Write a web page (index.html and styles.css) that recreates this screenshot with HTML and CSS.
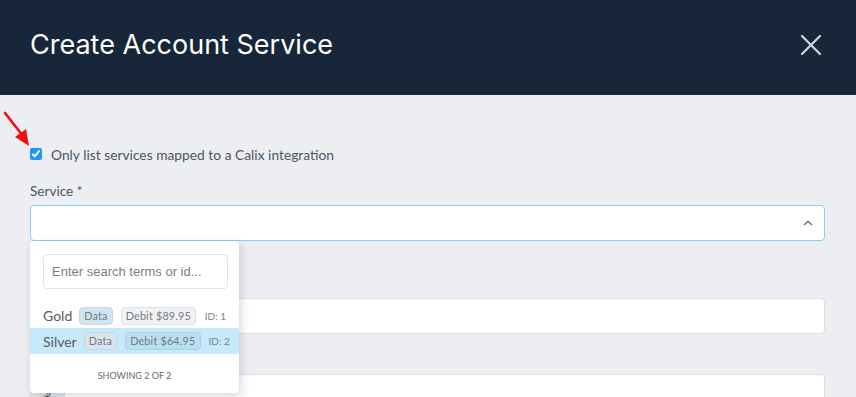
FILE: index.html
```html
<!DOCTYPE html>
<html lang="en">
<head>
    <meta charset="UTF-8">
    <title>Create Account Service</title>
    <link rel="stylesheet" href="styles.css">
</head>
<body>
    <div class="modal">
        <div class="modal-header">
            <h1>Create Account Service</h1>
            <button class="close" aria-label="Close">
                <svg width="20" height="20" viewBox="0 0 20 20"><path d="M1 1L19 19M19 1L1 19" stroke="#d3d7dc" stroke-width="2.2" stroke-linecap="round"/></svg>
            </button>
        </div>

        <div class="modal-body">
            <!-- annotation arrow -->
            <svg class="pointer" width="32" height="38" viewBox="0 0 32 38">
                <path d="M3 3L21 26" stroke="#f01010" stroke-width="2.6" stroke-linecap="round"/>
                <path d="M13 27L27 36L24 19Z" fill="#f01010"/>
            </svg>

            <label class="check-row">
                <input type="checkbox" checked>
                <span>Only list services mapped to a Calix integration</span>
            </label>

            <div class="field field-service">
                <label>Service *</label>
                <div class="select open">
                    <svg class="caret" width="10" height="6" viewBox="0 0 10 6"><path d="M1 5L5 1.5L9 5" fill="none" stroke="#6b7380" stroke-width="1.6"/></svg>
                </div>

                <!-- Dropdown -->
                <div class="dropdown">
                    <input type="text" class="search" placeholder="Enter search terms or id...">
                    <ul class="options">
                        <li>
                            <span class="name">Gold</span>
                            <span class="badge badge-type">Data</span>
                            <span class="badge badge-price">Debit $89.95</span>
                            <span class="id">ID: 1</span>
                        </li>
                        <li class="active">
                            <span class="name">Silver</span>
                            <span class="badge badge-type">Data</span>
                            <span class="badge badge-price">Debit $64.95</span>
                            <span class="id">ID: 2</span>
                        </li>
                    </ul>
                    <div class="count">Showing 2 of 2</div>
                </div>
            </div>

            <div class="field">
                <label>Start Date</label>
                <input type="text" class="input">
            </div>

            <div class="field">
                <label>Price</label>
                <div class="input-group">
                    <span class="addon">$</span>
                    <input type="text" class="input">
                </div>
            </div>
        </div>
    </div>
</body>
</html>
```

FILE: styles.css
```css
body {
    margin: 0;
    background: #eceef2;
    font-family: "Lato", "Noto Sans", sans-serif;
    color: #4d5562;
    overflow: hidden;
}

/* Header */
.modal-header {
    height: 95px;
    background: #172638;
    display: flex;
    align-items: center;
    justify-content: space-between;
    padding: 0 35px 0 30px;
}

h1 {
    margin: 0;
    margin-top: -6px;
    font-family: "Inter", sans-serif;
    font-weight: 400;
    font-size: 27px;
    color: #fff;
}

.close {
    background: none;
    border: none;
    padding: 0;
    width: 20px;
    height: 20px;
    margin-top: -6px;
    cursor: pointer;
}

/* Body */
.modal-body {
    position: relative;
    padding: 51px 31px 0 30px;
}

.pointer {
    position: absolute;
    left: 2px;
    top: 15px;
}

.check-row {
    display: flex;
    align-items: center;
    gap: 9px;
    font-size: 13.8px;
    height: 16px;
}

.check-row input {
    margin: 0;
    width: 12px;
    height: 12px;
    accent-color: #2196f3;
}

.field {
    position: relative;
    margin-bottom: 18px;
}

.field label {
    display: block;
    font-size: 13.6px;
    line-height: 16px;
    margin-bottom: 6px;
}

.field-service {
    margin-top: 21px;
    margin-bottom: 35px;
}

.select {
    height: 34px;
    background: #fff;
    border: 1px solid #7fd2fb;
    border-radius: 4px;
    position: relative;
}

.caret {
    position: absolute;
    right: 11px;
    top: 14px;
}

.input {
    display: block;
    box-sizing: border-box;
    width: 100%;
    height: 36px;
    background: #fff;
    border: 1px solid #dcdfe4;
    border-radius: 4px;
}

.input-group {
    display: flex;
}

.addon {
    width: 36px;
    height: 36px;
    box-sizing: border-box;
    background: #e3e6ea;
    border: 1px solid #dcdfe4;
    border-radius: 4px 0 0 4px;
    display: flex;
    align-items: center;
    justify-content: center;
    font-size: 13px;
    color: #555;
}

.input-group .input {
    border-left: none;
    border-radius: 0 4px 4px 0;
}

/* Dropdown */
.dropdown {
    position: absolute;
    left: 0;
    top: 58px;
    width: 209px;
    height: 152px;
    box-sizing: border-box;
    background: #fff;
    border-radius: 4px;
    box-shadow: 2px 3px 10px rgba(30, 40, 60, 0.18);
    padding-top: 13px;
    z-index: 2;
}

.search {
    display: block;
    box-sizing: border-box;
    width: 185px;
    height: 35px;
    margin: 0 0 0 13px;
    padding: 0 8px;
    border: 1px solid #e1e4e8;
    border-radius: 4px;
    font-family: "Liberation Sans", Arial, sans-serif;
    font-size: 13px;
}

.search::placeholder {
    color: #7a7f86;
}

.options {
    list-style: none;
    margin: 14px 0 0;
    padding: 0;
}

.options li {
    display: flex;
    align-items: center;
    height: 25px;
    padding: 0 13px;
    white-space: nowrap;
}

.options li.active {
    background: #c6eafc;
    height: 26px;
}

.name {
    font-size: 14px;
    color: #555b63;
    margin-right: 7px;
}

.badge {
    flex-shrink: 0;
    font-size: 10.8px;
    letter-spacing: 0.2px;
    line-height: 16px;
    padding: 0 4px;
    border-radius: 4px;
    color: #737a83;
    margin-right: 8px;
}

.badge-type {
    background: #d2e4ef;
    border: 1px solid #c4d8e6;
}

.options li.active .badge-type {
    background: #dae5eb;
}

.badge-price {
    background: #f1f2f3;
    border: 1px solid #dfe1e4;
}

.options li.active .badge-price {
    background: #badff1;
    border-color: #a9d2e6;
}

.id {
    margin-left: auto;
    font-size: 10px;
    color: #7b818a;
}

.count {
    text-align: center;
    font-size: 9px;
    text-transform: uppercase;
    color: #666b72;
    margin-top: 16px;
}
```
